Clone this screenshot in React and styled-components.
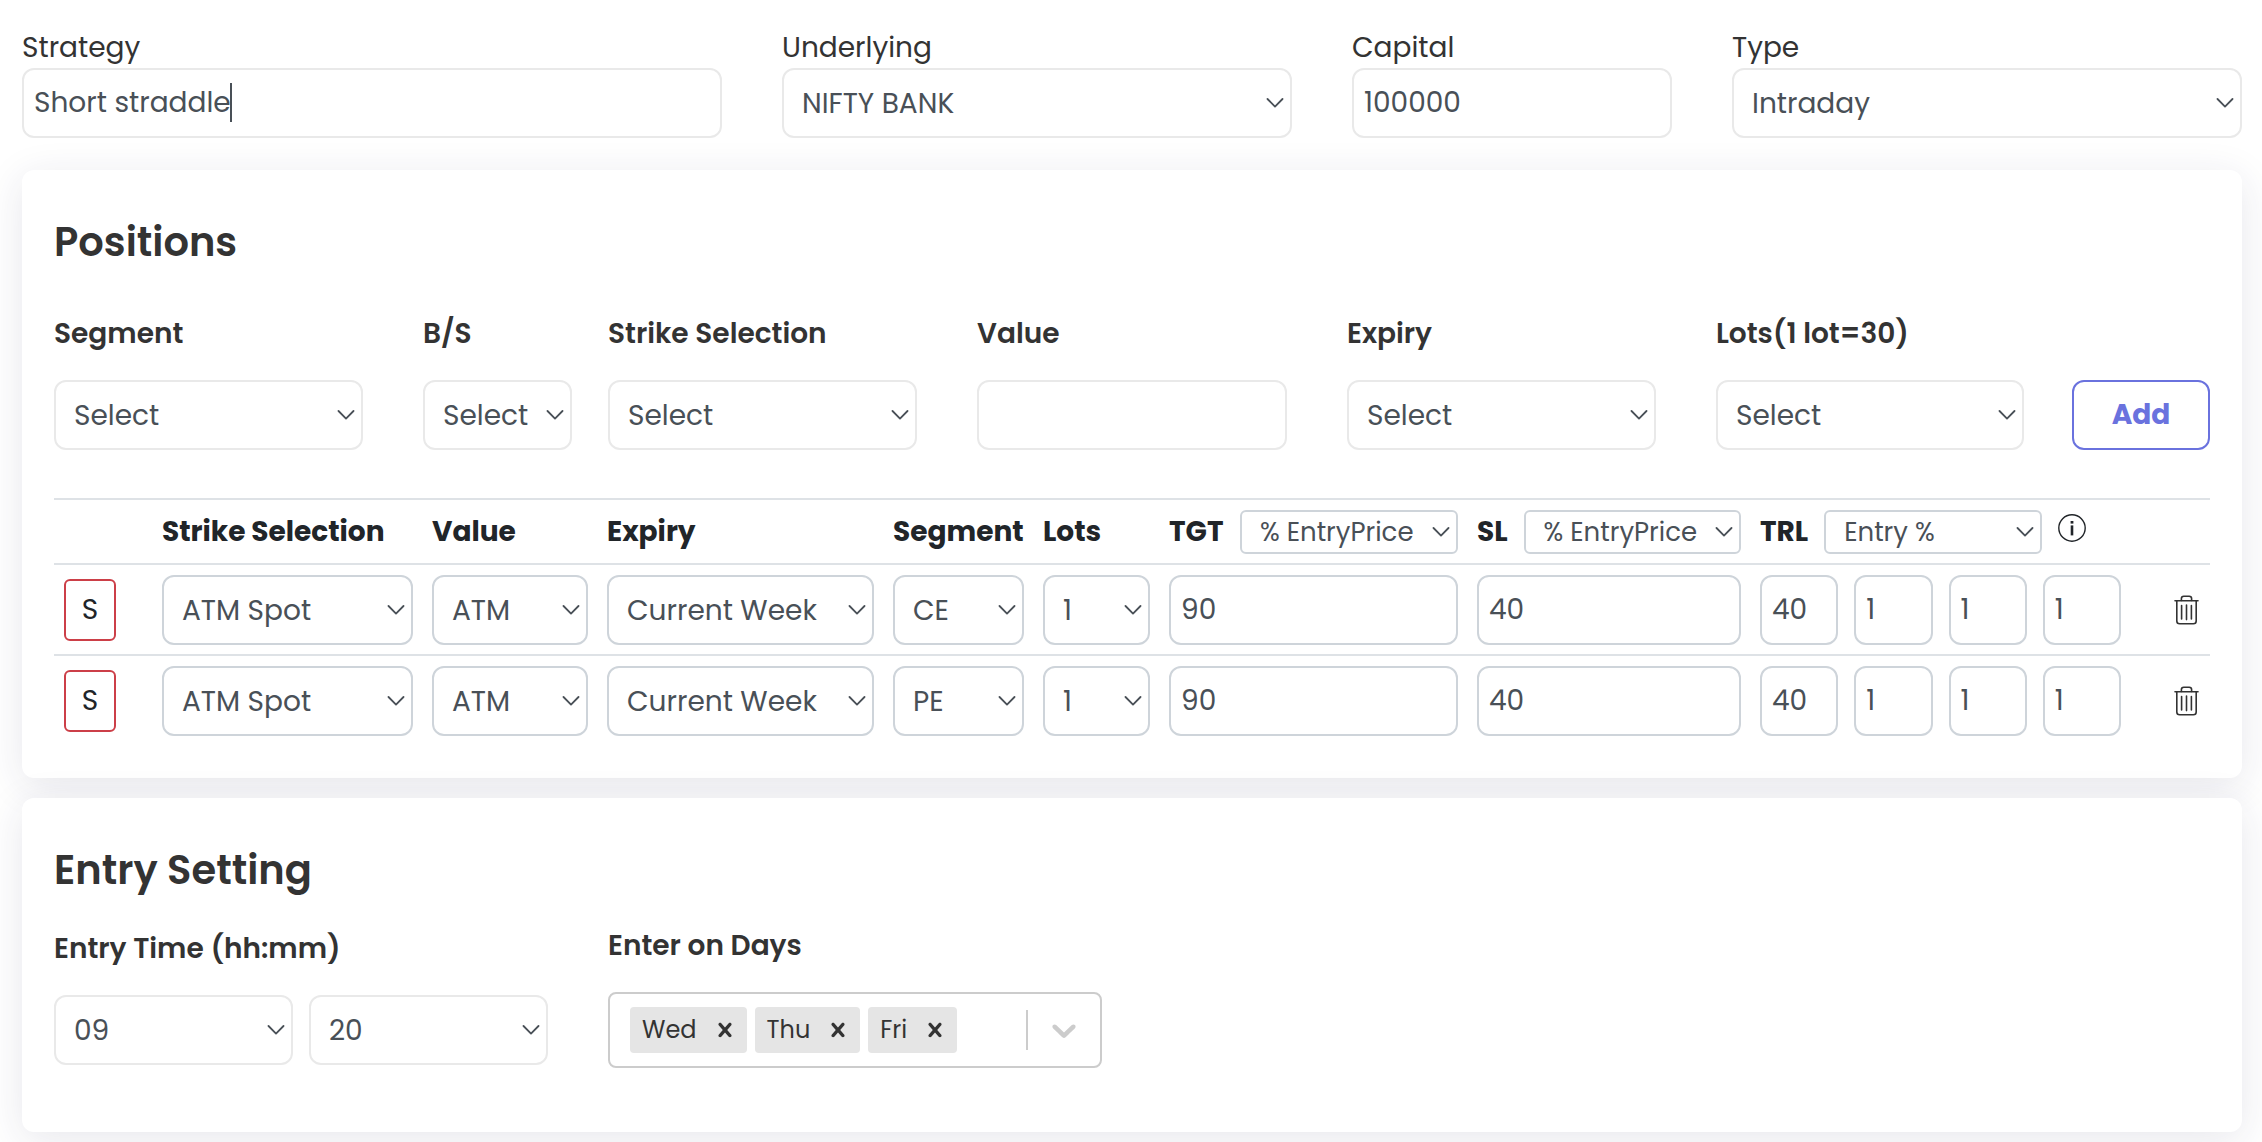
import React, { useId, useLayoutEffect, useRef, useState } from "react";
import styled, { createGlobalStyle, css } from "styled-components";

const FONT = 'Poppins, Inter, "Open Sans", sans-serif';

const chevron =
  "url(\"data:image/svg+xml,%3Csvg xmlns='http://www.w3.org/2000/svg' width='18' height='10' viewBox='0 0 18 10' fill='none' stroke='%23495057' stroke-width='1.8' stroke-linecap='round' stroke-linejoin='round'%3E%3Cpath d='M1.5 1 9 8.6 16.5 1'/%3E%3C/svg%3E\")";

const GlobalStyle = createGlobalStyle`
  *, *::before, *::after { box-sizing: border-box; }
  body {
    margin: 0;
    background: #fff;
    color: #333;
    font-family: ${FONT};
    font-size: 28px;
    line-height: 42px;
  }
  button, input, select { font: inherit; margin: 0; }
`;

const Page = styled.main`
  padding: 28px 20px 10px 22px;
  overflow: hidden;
`;

const Summary = styled.div`
  display: grid;
  grid-template-columns: 700fr 510fr 320fr 510fr;
  gap: 60px;
  margin-bottom: 32px;
`;

const FieldBox = styled.div`
  display: flex;
  flex-direction: column;
  min-width: 0;
  gap: ${(p) => (p.$strong ? "26px" : "0")};
  padding-right: ${(p) => p.$trail || 0}px;
`;

const Label = styled.label`
  font-size: 28px;
  line-height: 40px;
  font-weight: ${(p) => (p.$strong ? 600 : 400)};
  white-space: nowrap;
`;

const control = css`
  display: block;
  width: 100%;
  min-width: 0;
  height: 70px;
  border: 2px solid ${(p) => (p.$table ? "#ced4da" : "#e9e9e9")};
  border-radius: 12px;
  background-color: #fff;
  color: #495057;
  outline: none;
`;

const Input = styled.input`
  ${control}
  padding: 0 10px;
`;

const Select = styled.select`
  ${control}
  appearance: none;
  padding: 2px 30px 0 18px;
  background-image: ${chevron};
  background-repeat: no-repeat;
  background-position: right 6px center;
  ${(p) =>
    p.$compact &&
    css`
      flex: 0 1 218px;
      height: 44px;
      padding-top: 0;
      font-size: 26px;
      font-weight: 400;
      line-height: 40px;
      border-radius: 6px;
    `}
`;

const CaretInput = styled(Input)`
  caret-color: transparent;
`;

const CaretWrap = styled.div`
  position: relative;
`;

const Caret = styled.span`
  position: absolute;
  top: 15px;
  width: 2px;
  height: 39px;
  background: #495057;
`;

const Card = styled.section`
  position: relative;
  padding: 42px 32px 33px;
  border-radius: 12px;
  background: #fff;
  box-shadow: 0 8px 40px rgba(35, 40, 85, 0.11);
  & + & {
    margin-top: 20px;
  }
`;

const Title = styled.h2`
  margin: 0;
  font-size: 40px;
  line-height: 60px;
  font-weight: 600;
`;

const NewPosition = styled.form`
  display: grid;
  grid-template-columns: 333fr 149fr 333fr 334fr 333fr 320fr 138fr;
  gap: 36px;
  align-items: end;
  margin: 42px 0 48px;
`;

const AddButton = styled.button`
  height: 70px;
  padding: 0;
  border: 2px solid #6a72de;
  border-radius: 12px;
  background: #fff;
  color: #6a72de;
  font-weight: 700;
`;

const TableScroll = styled.div`
  overflow-x: auto;
`;

const Table = styled.table`
  width: 100%;
  table-layout: fixed;
  border-collapse: separate;
  border-spacing: 0;
  color: #212529;

  th, td {
    padding: 10px 19px 9px 0;
    border-top: 2px solid #dee2e6;
    text-align: left;
    vertical-align: middle;
  }
  th {
    font-weight: 700;
    white-space: nowrap;
  }
  td:first-child { padding-left: 10px; }
  td:last-child { padding-right: 11px; }
`;

const Col = styled.col`
  width: ${(p) => p.$w}px;
`;

const HeadCell = styled.div`
  display: flex;
  align-items: center;
  justify-content: ${(p) => (p.$packed ? "flex-start" : "space-between")};
  gap: 16px;
  height: 44px;
`;

const InfoMark = styled.span`
  display: flex;
  padding-bottom: 8px;
`;

const Trail = styled.div`
  display: grid;
  grid-template-columns: repeat(4, 1fr);
  gap: 16px;
`;

const Side = styled.button`
  display: block;
  width: 52px;
  height: 62px;
  padding: 0;
  border: 2px solid #cc3f48;
  border-radius: 6px;
  background: #fff;
  color: #212529;
`;

const IconButton = styled.button`
  display: flex;
  padding: 0;
  border: 0;
  background: none;
  color: #333;
`;

const DeleteButton = styled(IconButton)`
  margin-left: auto;
`;

const EntryGrid = styled.div`
  display: grid;
  grid-template-columns: repeat(4, 1fr);
  gap: 60px;
  align-items: center;
  margin: 26px 0 31px;
`;

const TimePair = styled.div`
  display: grid;
  grid-template-columns: 1fr 1fr;
  gap: 16px;
`;

const MultiSelect = styled.div`
  display: flex;
  align-items: center;
  height: 76px;
  padding-left: 20px;
  border: 2px solid #ccc;
  border-radius: 8px;
  background: #fff;
`;

const Tags = styled.div`
  display: flex;
  flex: 1;
  gap: 8px;
`;

const Tag = styled.span`
  display: flex;
  align-items: center;
  height: 46px;
  padding-left: 12px;
  border-radius: 4px;
  background: #e5e5e5;
  font-size: 24px;
`;

const RemoveTag = styled(IconButton)`
  padding: 0 8px 0 14px;
`;

const OpenDays = styled(IconButton)`
  padding: 0 16px;
  border-left: 2px solid #ccc;
  color: #ccc;
`;

function Picker({ options, ...rest }) {
  return (
    <Select {...rest}>
      {options.map((o) => (
        <option key={o}>{o}</option>
      ))}
    </Select>
  );
}

function Field({ label, strong, trail, children }) {
  const id = useId();
  return (
    <FieldBox $strong={strong} $trail={trail}>
      <Label htmlFor={id} $strong={strong}>
        {label}
      </Label>
      {React.cloneElement(children, { id })}
    </FieldBox>
  );
}

function StrategyInput({ id }) {
  const ref = useRef(null);
  const [name, setName] = useState("Short straddle");
  const [left, setLeft] = useState(0);

  useLayoutEffect(() => {
    const style = getComputedStyle(ref.current);
    const ctx = document.createElement("canvas").getContext("2d");
    ctx.font = `${style.fontSize} ${style.fontFamily}`;
    setLeft(11 + Math.round(ctx.measureText(name).width));
  }, [name]);

  return (
    <CaretWrap>
      <CaretInput id={id} ref={ref} value={name} onChange={(e) => setName(e.target.value)} />
      <Caret style={{ left }} />
    </CaretWrap>
  );
}

function InfoIcon() {
  return (
    <svg width="28" height="28" viewBox="0 0 28 28" fill="none" stroke="#212529" role="img" aria-label="Info">
      <circle cx="14" cy="14" r="13.2" strokeWidth="1.4" />
      <path d="M14 11.4V21.4" strokeWidth="2.6" />
      <path d="M14 7V9.6" strokeWidth="2.8" />
    </svg>
  );
}

function TrashIcon() {
  return (
    <svg width="25" height="30" viewBox="0 0 25 30" fill="none" stroke="currentColor" strokeWidth="1.6" strokeLinecap="round">
      <path d="M1 5.8H24" />
      <path d="M7.4 5.5V3.6Q7.4 1.2 9.8 1.2H15.2Q17.6 1.2 17.6 3.6V5.5" />
      <path d="M2.8 6V26Q2.8 28.8 5.6 28.8H19.4Q22.2 28.8 22.2 26V6" />
      <path d="M7.6 10.5V24M12.5 10V24.6M17.4 10.5V24" />
    </svg>
  );
}

const columns = [108, 270, 175, 286, 150, 126, 308, 283, 380, 70];

const legs = [
  { strike: "ATM Spot", value: "ATM", expiry: "Current Week", segment: "CE", lots: "1", tgt: "90", sl: "40", trail: ["40", "1", "1", "1"] },
  { strike: "ATM Spot", value: "ATM", expiry: "Current Week", segment: "PE", lots: "1", tgt: "90", sl: "40", trail: ["40", "1", "1", "1"] },
];

function Leg({ leg }) {
  return (
    <tr>
      <td><Side type="button">S</Side></td>
      <td><Picker $table aria-label="Strike Selection" options={[leg.strike]} /></td>
      <td><Picker $table aria-label="Value" options={[leg.value]} /></td>
      <td><Picker $table aria-label="Expiry" options={[leg.expiry]} /></td>
      <td><Picker $table aria-label="Segment" options={[leg.segment]} /></td>
      <td><Picker $table aria-label="Lots" options={[leg.lots]} /></td>
      <td><Input $table aria-label="TGT" defaultValue={leg.tgt} /></td>
      <td><Input $table aria-label="SL" defaultValue={leg.sl} /></td>
      <td>
        <Trail>
          {leg.trail.map((v, i) => (
            <Input key={i} $table aria-label={`TRL ${i + 1}`} defaultValue={v} />
          ))}
        </Trail>
      </td>
      <td>
        <DeleteButton type="button" aria-label="Delete"><TrashIcon /></DeleteButton>
      </td>
    </tr>
  );
}

export default function App() {
  return (
    <>
      <GlobalStyle />
      <Page>
        <Summary>
          <Field label="Strategy"><StrategyInput /></Field>
          <Field label="Underlying"><Picker options={["NIFTY BANK"]} /></Field>
          <Field label="Capital"><Input defaultValue="100000" /></Field>
          <Field label="Type"><Picker options={["Intraday"]} /></Field>
        </Summary>

        <Card>
          <Title>Positions</Title>
          <NewPosition onSubmit={(e) => e.preventDefault()}>
            <Field strong trail={24} label="Segment"><Picker options={["Select"]} /></Field>
            <Field strong label="B/S"><Picker options={["Select"]} /></Field>
            <Field strong trail={24} label="Strike Selection"><Picker options={["Select"]} /></Field>
            <Field strong trail={24} label="Value"><Input /></Field>
            <Field strong trail={24} label="Expiry"><Picker options={["Select"]} /></Field>
            <Field strong trail={12} label="Lots(1 lot=30)"><Picker options={["Select"]} /></Field>
            <AddButton>Add</AddButton>
          </NewPosition>
          <TableScroll>
            <Table>
              <colgroup>
                {columns.map((w, i) => <Col key={i} $w={w} />)}
              </colgroup>
              <thead>
                <tr>
                  <th />
                  <th>Strike Selection</th>
                  <th>Value</th>
                  <th>Expiry</th>
                  <th>Segment</th>
                  <th>Lots</th>
                  <th>
                    <HeadCell>
                      TGT
                      <Picker $table $compact aria-label="TGT unit" options={["% EntryPrice"]} />
                    </HeadCell>
                  </th>
                  <th>
                    <HeadCell>
                      SL
                      <Picker $table $compact aria-label="SL unit" options={["% EntryPrice"]} />
                    </HeadCell>
                  </th>
                  <th>
                    <HeadCell $packed>
                      TRL
                      <Picker $table $compact aria-label="TRL unit" options={["Entry %"]} />
                      <InfoMark><InfoIcon /></InfoMark>
                    </HeadCell>
                  </th>
                  <th />
                </tr>
              </thead>
              <tbody>
                {legs.map((leg, i) => <Leg key={i} leg={leg} />)}
              </tbody>
            </Table>
          </TableScroll>
        </Card>

        <Card>
          <Title>Entry Setting</Title>
          <EntryGrid>
            <FieldBox $strong>
              <Label as="div" $strong>Entry Time (hh:mm)</Label>
              <TimePair>
                <Picker aria-label="Entry hour" options={["09"]} />
                <Picker aria-label="Entry minute" options={["20"]} />
              </TimePair>
            </FieldBox>
            <FieldBox $strong>
              <Label as="div" $strong>Enter on Days</Label>
              <MultiSelect>
                <Tags>
                  {["Wed", "Thu", "Fri"].map((d) => (
                    <Tag key={d}>
                      {d}
                      <RemoveTag type="button" aria-label={`Remove ${d}`}>
                        <svg width="28" height="28" viewBox="0 0 20 20" fill="currentColor">
                          <path d="M14.348 14.849c-0.469 0.469-1.229 0.469-1.697 0l-2.651-3.030-2.651 3.029c-0.469 0.469-1.229 0.469-1.697 0-0.469-0.469-0.469-1.229 0-1.697l2.758-3.15-2.759-3.152c-0.469-0.469-0.469-1.228 0-1.697s1.228-0.469 1.697 0l2.652 3.031 2.651-3.031c0.469-0.469 1.228-0.469 1.697 0s0.469 1.229 0 1.697l-2.758 3.152 2.758 3.15c0.469 0.469 0.469 1.229 0 1.698z" />
                        </svg>
                      </RemoveTag>
                    </Tag>
                  ))}
                </Tags>
                <OpenDays type="button" aria-label="Choose days">
                  <svg width="40" height="40" viewBox="0 0 20 20" fill="currentColor">
                    <path d="M4.516 7.548c0.436-0.446 1.043-0.481 1.576 0l3.908 3.747 3.908-3.747c0.533-0.481 1.141-0.446 1.574 0 0.436 0.445 0.408 1.197 0 1.615-0.406 0.418-4.695 4.502-4.695 4.502-0.217 0.223-0.502 0.335-0.787 0.335s-0.57-0.112-0.789-0.335c0 0-4.287-4.084-4.695-4.502s-0.436-1.17 0-1.615z" />
                  </svg>
                </OpenDays>
              </MultiSelect>
            </FieldBox>
          </EntryGrid>
        </Card>
      </Page>
    </>
  );
}
